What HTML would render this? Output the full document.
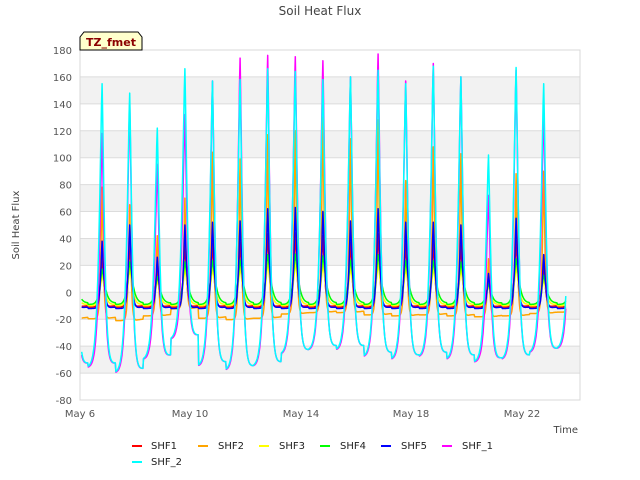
<!DOCTYPE html>
<html><head><meta charset="utf-8"><style>
html,body{margin:0;padding:0;background:#fff;}
svg{display:block;font-family:"DejaVu Sans","Liberation Sans",sans-serif;}
</style></head><body>
<svg id="s" width="640" height="480" xmlns="http://www.w3.org/2000/svg">
<rect width="640" height="480" fill="#fff"/>
<g id="bands"></g>
<g id="grid"></g>
<rect x="80" y="50" width="500" height="350" fill="none" stroke="#d8d8d8" stroke-width="1"/>
<g id="lines" fill="none" stroke-width="1.5" stroke-linejoin="round"></g>
<g id="ylab" font-size="10" fill="#555" text-anchor="end"></g>
<g font-size="10" fill="#555" text-anchor="middle">
<text x="80" y="417">May 6</text><text x="190" y="417">May 10</text><text x="301" y="417">May 14</text><text x="411" y="417">May 18</text><text x="522" y="417">May 22</text>
</g>
<text x="320" y="15" font-size="12" fill="#444" text-anchor="middle">Soil Heat Flux</text>
<text x="19" y="225" font-size="10" fill="#444" text-anchor="middle" transform="rotate(-90 19 225)">Soil Heat Flux</text>
<text x="578" y="433" font-size="10" fill="#444" text-anchor="end">Time</text>
<path d="M80,50 V37 L84,32 H138 L142,37 V50 Z" fill="#ffffcc" stroke="#000" stroke-width="1"/>
<text x="111" y="46" font-size="11" font-weight="bold" fill="#8b0000" text-anchor="middle">TZ_fmet</text>
<g font-size="10" fill="#222">
<line x1="132" y1="446" x2="142" y2="446" stroke="#f00" stroke-width="2"/><text x="151" y="449">SHF1</text>
<line x1="198" y1="446" x2="208" y2="446" stroke="#ffa500" stroke-width="2"/><text x="218" y="449">SHF2</text>
<line x1="259" y1="446" x2="269" y2="446" stroke="#ff0" stroke-width="2"/><text x="279" y="449">SHF3</text>
<line x1="320" y1="446" x2="330" y2="446" stroke="#0f0" stroke-width="2"/><text x="340" y="449">SHF4</text>
<line x1="381" y1="446" x2="391" y2="446" stroke="#00f" stroke-width="2"/><text x="401" y="449">SHF5</text>
<line x1="442" y1="446" x2="452" y2="446" stroke="#f0f" stroke-width="2"/><text x="462" y="449">SHF_1</text>
<line x1="132" y1="462" x2="142" y2="462" stroke="#0ff" stroke-width="2"/><text x="151" y="465">SHF_2</text>
</g>
</svg>
<script>
var NS="http://www.w3.org/2000/svg";
function Y(v){return 50+(180-v)*350/260;}
function X(t){return 80+t*27.6;}
function el(p,tag,a){var e=document.createElementNS(NS,tag);for(var k in a)e.setAttribute(k,a[k]);document.getElementById(p).appendChild(e);return e;}
[[140,160],[100,120],[60,80],[20,40],[-20,0],[-60,-40]].forEach(function(r){el("bands","rect",{x:80,y:Y(r[1]),width:500,height:Y(r[0])-Y(r[1]),fill:"#f2f2f2"});});
for(var v=-80;v<=180;v+=20){el("grid","line",{x1:80,x2:580,y1:Y(v),y2:Y(v),stroke:"#dcdcdc","stroke-width":1});
 var t=el("ylab","text",{x:72,y:Y(v)+4});t.textContent=v;}
var pk2=[155,148,122,166,157,158,166,164,158,160,165,155,168,160,102,167,155,150];
var pk1=[118,140,95,132,157,174,176,175,172,160,177,157,170,160,72,165,135,130];
var tr2=[-56,-60,-50,-35,-55,-58,-55,-46,-43,-43,-48,-50,-48,-50,-52,-50,-45,-42];
var pkO=[78,65,42,70,104,99,117,120,130,114,128,83,108,103,25,88,90,60];
var pkB=[38,50,26,50,52,53,62,63,60,53,62,52,52,50,14,55,28,30];
function series(pk,tr,sig,skew){
 var d="";for(var k=3;k<=880;k++){var t=k/50;
  var day=Math.floor(t-0.3+1e-6),f=t-day;var i=Math.max(0,Math.min(17,day));
  var dx=f-0.8;if(Math.abs(dx)<1e-6)dx=0;var s=dx<0?sig:sig*skew;
  var g=Math.exp(-Math.pow(Math.abs(dx)/s,1.3));
  var tt=tr[i]+ (1-Math.exp(-Math.max(0,f-1.0)*6))*4*(tr[i]<-30?1:0.3);
  var v=tt+(pk[i]-tt)*g;
  d+=(d?"L":"M")+X(t).toFixed(1)+","+Y(v).toFixed(1);}
 return d;}
function c(a,k){return a.map(function(x){return x*k;});}
function cst(v){return pk2.map(function(){return v;});}
var L=[
 [series(c(pkB,0.7),cst(-11),0.08,1.0),"#f00"],
 [series(pkO,c(tr2,0.35),0.06,1.0),"#ffa500"],
 [series(c(pkB,0.35),cst(-10),0.1,1.3),"#ff0"],
 [series(c(pkB,0.45),cst(-9),0.11,1.4),"#0f0"],
 [series(pkB,cst(-12),0.07,1.2),"#00f"],
 [series(pk1,tr2,0.13,0.85),"#f0f"],
 [series(pk2,tr2,0.14,0.8),"#0ff"]];
L.forEach(function(l){el("lines","path",{d:l[0],stroke:l[1]});});
</script>
</body></html>
